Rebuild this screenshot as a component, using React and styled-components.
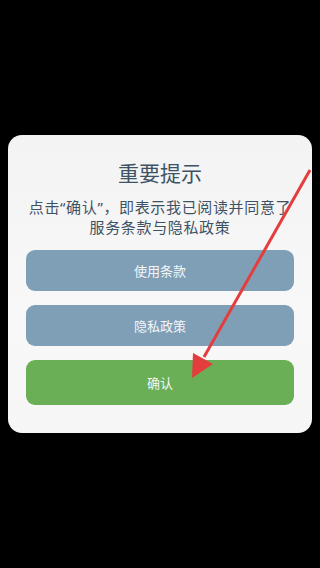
import React from 'react';
import styled, { createGlobalStyle } from 'styled-components';

const GlobalStyle = createGlobalStyle`
  html, body {
    margin: 0;
    padding: 0;
    background: #000;
  }
  body {
    font-family: "Noto Sans", "Noto Sans CJK SC", sans-serif;
  }
`;

const Screen = styled.div`
  position: relative;
  width: 320px;
  height: 568px;
  background: #000;
  overflow: hidden;
  padding-top: 135px;
  box-sizing: border-box;
`;

const Dialog = styled.div`
  margin: 0 8px;
  height: 298px;
  box-sizing: border-box;
  border-radius: 14px;
  background: linear-gradient(#f3f3f3, #f8f8f8 60%, #f6f6f6);
  padding: 24px 18px 28px;
  display: flex;
  flex-direction: column;
  align-items: stretch;
`;

const Title = styled.h2`
  margin: 0;
  font-size: 21px;
  line-height: 28px;
  font-weight: 400;
  color: #3e5265;
  text-align: center;
`;

const Message = styled.div`
  margin: 10px -8px 13px;
  display: flex;
  flex-direction: column;
  align-items: center;
  color: #3e5265;
`;

const Line = styled.span`
  font-size: 15px;
  line-height: 20px;
  height: 20px;
  letter-spacing: 0.65px;
  white-space: nowrap;
`;

const Actions = styled.div`
  display: flex;
  flex-direction: column;
  gap: 14px;
`;

const Button = styled.button`
  height: ${(p) => (p.$primary ? 45 : 41)}px;
  border: none;
  border-radius: 9px;
  background: ${(p) => (p.$primary ? '#6aaf55' : '#7f9fb7')};
  color: #f4f6f8;
  font-family: "Noto Sans", "Noto Sans CJK SC", sans-serif;
  font-size: 13px;
  padding: 0;
`;

const Pointer = styled.svg`
  position: absolute;
  left: 0;
  top: 0;
  pointer-events: none;
`;

export default function App() {
  return (
    <>
      <GlobalStyle />
      <Screen>
        <Dialog>
          <Title>重要提示</Title>
          <Message>
            <Line>点击“确认”，即表示我已阅读并同意了</Line>
            <Line>服务条款与隐私政策</Line>
          </Message>
          <Actions>
            <Button>使用条款</Button>
            <Button>隐私政策</Button>
            <Button $primary>确认</Button>
          </Actions>
        </Dialog>
        <Pointer width="320" height="568" viewBox="0 0 320 568">
          <line x1="310" y1="170" x2="204" y2="357" stroke="#e43d3d" strokeWidth="3" />
          <polygon points="192,378 193,353 213,364" fill="#e43d3d" />
        </Pointer>
      </Screen>
    </>
  );
}
